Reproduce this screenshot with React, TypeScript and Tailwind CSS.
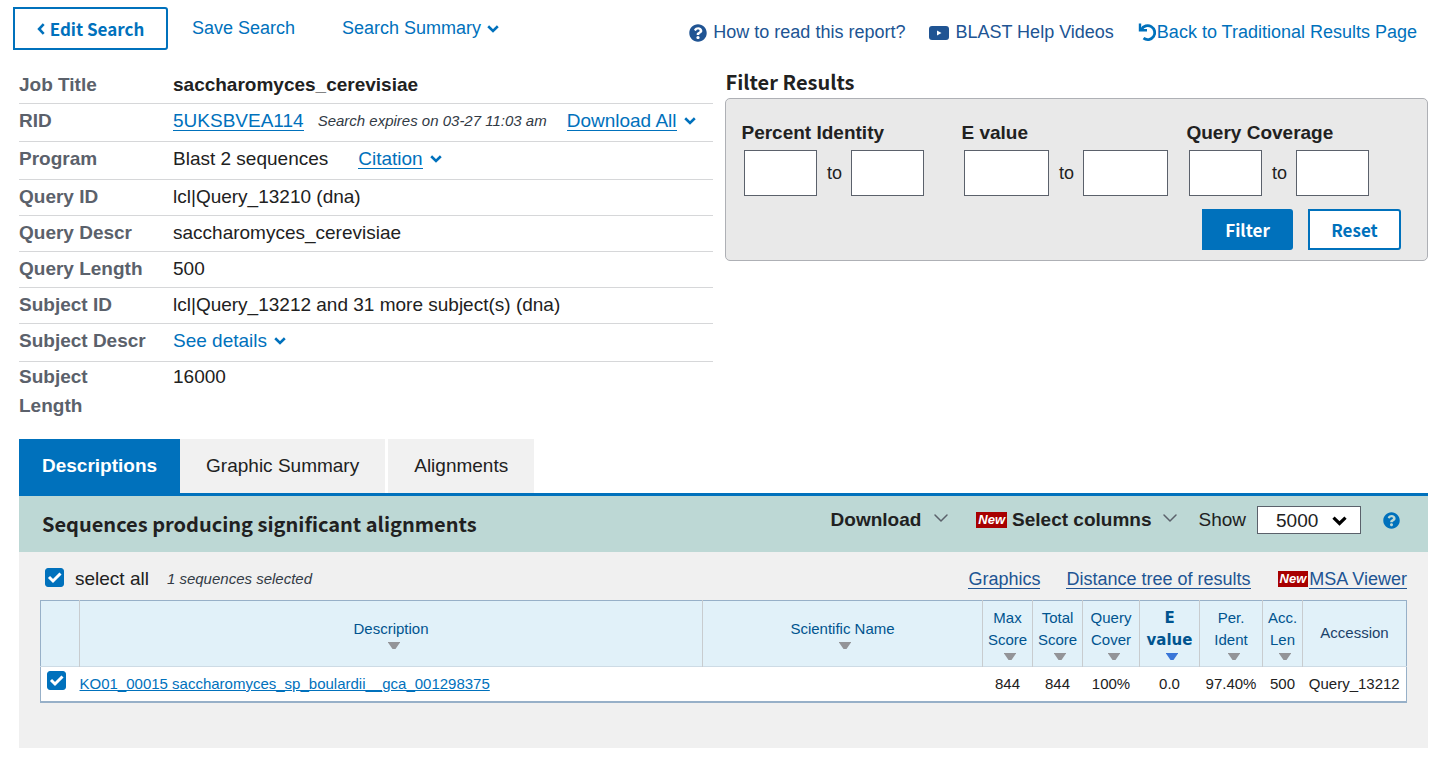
import { useState } from 'react';
import type { ReactNode } from 'react';
import { FaQuestionCircle } from 'react-icons/fa';
import { ChevronDown } from 'lucide-react';

const TABS = ['Descriptions', 'Graphic Summary', 'Alignments'];

const FILTERS = [
  { id: 'identity', label: 'Percent Identity', block: 'w-[220px]', input: 'w-[73px]' },
  { id: 'evalue', label: 'E value', block: 'w-[225px]', input: 'w-[85px]' },
  { id: 'coverage', label: 'Query Coverage', block: 'w-[190px]', input: 'w-[73px]' },
];

const COLUMNS = [
  { lines: ['Description'], width: 'w-auto' },
  { lines: ['Scientific Name'], width: 'w-[280px]' },
  { lines: ['Max', 'Score'], width: 'w-[50px]' },
  { lines: ['Total', 'Score'], width: 'w-[50px]' },
  { lines: ['Query', 'Cover'], width: 'w-[57px]' },
  { lines: ['E', 'value'], width: 'w-[60px]', sorted: true },
  { lines: ['Per.', 'Ident'], width: 'w-[63px]' },
  { lines: ['Acc.', 'Len'], width: 'w-[40px]' },
];

const HITS = [
  {
    title: 'KO01_00015 saccharomyces_sp_boulardii__gca_001298375',
    values: ['', '844', '844', '100%', '0.0', '97.40%', '500', 'Query_13212'],
  },
];

const LINK = 'text-[#0071bc] border-b border-[#0071bc] leading-[19px]';
const DARK_LINK = 'text-[#205493] border-b border-[#205493] leading-[18px]';

function Caret({ className = 'h-2 w-3' }: { className?: string }) {
  return (
    <svg viewBox="0 0 12 8" className={`shrink-0 ${className}`} fill="none" stroke="currentColor" strokeWidth="2.6" aria-hidden="true">
      <path d="M1.200 1.300L6 5.900l4.800-4.600" />
    </svg>
  );
}

function CaretLeft() {
  return (
    <svg viewBox="0 0 8 12" className="h-3 w-2 shrink-0" fill="none" stroke="currentColor" strokeWidth="2.6" aria-hidden="true">
      <path d="M6.700 1.200L2.100 6l4.600 4.800" />
    </svg>
  );
}

function VideoIcon() {
  return (
    <svg viewBox="0 0 20 14" className="h-[14px] w-5 shrink-0" aria-hidden="true">
      <rect width="20" height="14" rx="3" fill="#205493" />
      <path d="M8 4.500v5l4.500-2.500z" fill="#fff" />
    </svg>
  );
}

function UndoIcon() {
  return (
    <svg viewBox="0 0 19 19" className="size-[19px] shrink-0" fill="none" stroke="currentColor" aria-hidden="true">
      <path d="M3.500 6.500A7 7 0 1 1 5.500 15.200" strokeWidth="2.800" />
      <path d="M2 .5v6.800h7" strokeWidth="2.400" />
    </svg>
  );
}

function NewBadge() {
  return (
    <span className="bg-[#a80000] px-[2px] text-[13px] leading-4 font-bold text-white italic">New</span>
  );
}

function CheckBox({ label, checked, onChange }: { label?: string; checked: boolean; onChange: () => void }) {
  return (
    <span className="relative block size-[19px] shrink-0">
      <input
        id={label ? undefined : 'select-all'}
        type="checkbox"
        aria-label={label}
        checked={checked}
        onChange={onChange}
        className="block size-[19px] appearance-none rounded-[3px] border border-[#0071bc] bg-white checked:bg-[#0071bc]"
      />
      {checked && (
        <svg viewBox="0 0 19 19" className="pointer-events-none absolute inset-0" fill="none" stroke="#fff" strokeWidth="3">
          <path d="M4 9l4 4 7.500-7.500" />
        </svg>
      )}
    </span>
  );
}

function SummaryRow({ label, tall, children }: { label: string; tall?: boolean; children: ReactNode }) {
  return (
    <div className={`flex border-b border-[#d6d7d9] pt-[2px] leading-[29px] ${tall ? 'pb-[6px]' : 'pb-1'}`}>
      <dt className="w-[154px] shrink-0 font-bold whitespace-nowrap text-[#5b616b]">{label}</dt>
      <dd className="flex min-w-0 items-center">{children}</dd>
    </div>
  );
}

export default function App() {
  const [tab, setTab] = useState('Descriptions');
  const [selected, setSelected] = useState(true);
  const toggle = () => setSelected(!selected);

  return (
    <div className="bg-white pb-4 font-['Liberation_Sans',Arial,sans-serif] text-[19px] text-[#212121]">
      {/* Top links */}
      <header className="flex items-start justify-between pt-[7px] pr-6 pl-[13px] text-[18px] whitespace-nowrap text-[#0071bc]">
        <div className="flex items-center">
          <button
            type="button"
            className="flex h-[43px] w-[155px] items-center justify-center gap-[5px] rounded-r-[3px] border-2 border-[#0071bc] font-['Noto_Sans_CJK_SC',sans-serif] text-[17px] font-bold"
          >
            <CaretLeft />
            Edit Search
          </button>
          <a href="#save" className="ml-6">Save Search</a>
          <button type="button" className="ml-[47px] flex items-center gap-[6px]">
            Search Summary
            <Caret />
          </button>
        </div>
        <nav className="flex h-[51px] items-center">
          <a href="#help" className="flex items-center gap-[6px] text-[#205493]">
            <FaQuestionCircle className="size-[18px]" />
            How to read this report?
          </a>
          <a href="#videos" className="ml-6 flex items-center gap-[6px] text-[#205493]">
            <VideoIcon />
            BLAST Help Videos
          </a>
          <a href="#traditional" className="ml-6 flex items-center">
            <UndoIcon />
            Back to Traditional Results Page
          </a>
        </nav>
      </header>

      <main className="pr-[13px] pl-[19px]">
        <div className="grid grid-cols-[694fr_702fr] gap-3 pt-[3px]">
          {/* Job summary */}
          <dl className="pt-[7px]">
            <SummaryRow label="Job Title"><b>saccharomyces_cerevisiae</b></SummaryRow>
            <SummaryRow label="RID" tall>
              <a href="#rid" className={LINK}>5UKSBVEA114</a>
              <i className="ml-[14px] text-[15px] text-[#323a45]">Search expires on 03-27 11:03 am</i>
              <a href="#download" className={`ml-5 ${LINK}`}>Download All</a>
              <Caret className="ml-[7px] h-2 w-3 text-[#0071bc]" />
            </SummaryRow>
            <SummaryRow label="Program" tall>
              Blast 2 sequences
              <a href="#citation" className={`ml-[30px] ${LINK}`}>Citation</a>
              <Caret className="ml-[7px] h-2 w-3 text-[#0071bc]" />
            </SummaryRow>
            <SummaryRow label="Query ID">lcl|Query_13210 (dna)</SummaryRow>
            <SummaryRow label="Query Descr">saccharomyces_cerevisiae</SummaryRow>
            <SummaryRow label="Query Length">500</SummaryRow>
            <SummaryRow label="Subject ID">lcl|Query_13212 and 31 more subject(s) (dna)</SummaryRow>
            <SummaryRow label="Subject Descr" tall>
              <button type="button" className="flex items-center gap-[7px] text-[#0071bc]">
                See details
                <Caret />
              </button>
            </SummaryRow>
            <div className="flex leading-[29px]">
              <dt className="w-[154px] shrink-0 pr-12 font-bold text-[#5b616b]">Subject Length</dt>
              <dd>16000</dd>
            </div>
          </dl>

          {/* Filters */}
          <section>
            <h2 className="pt-1 font-['Noto_Sans_CJK_SC',sans-serif] text-[20px] leading-[33px] font-bold">Filter Results</h2>
            <form
              className="rounded-[5px] border border-[#aeb0b5] bg-[#e9e9e9] pt-5 pr-[26px] pb-[10px] pl-[15px]"
              onSubmit={(e) => e.preventDefault()}
            >
              <div className="flex">
                {FILTERS.map((f) => (
                  <fieldset key={f.id} className={f.block}>
                    <legend className="leading-[27px] font-bold">{f.label}</legend>
                    <div className="flex items-center pt-1 pl-[3px]">
                      <input aria-label={`${f.label} from`} className={`h-[46px] border border-[#5b616b] bg-white px-2 ${f.input}`} />
                      <label htmlFor={`${f.id}-to`} className="w-[34px] text-center text-[18px]">to</label>
                      <input id={`${f.id}-to`} className={`h-[46px] border border-[#5b616b] bg-white px-2 ${f.input}`} />
                    </div>
                  </fieldset>
                ))}
              </div>
              <div className="mt-[13px] flex justify-end gap-[15px] font-['Noto_Sans_CJK_SC',sans-serif] text-[17px] font-bold">
                <button type="submit" className="h-[41px] w-[91px] rounded-r-[3px] bg-[#0071bc] leading-[41px] text-white">
                  Filter
                </button>
                <button type="reset" className="h-[41px] w-[93px] rounded-r-[3px] border-2 border-[#0071bc] bg-white leading-[37px] text-[#0071bc]">
                  Reset
                </button>
              </div>
            </form>
          </section>
        </div>

        {/* Result tabs */}
        <div role="tablist" className="mt-[19px] flex gap-[3px] border-b-[3px] border-[#0071bc]">
          {TABS.map((name) => (
            <button
              key={name}
              type="button"
              role="tab"
              aria-selected={tab === name}
              onClick={() => setTab(name)}
              className={`h-[54px] ${
                tab === name ? '-mr-[3px] bg-[#0071bc] px-[23px] font-bold text-white' : 'bg-[#f1f1f1] px-[26px]'
              }`}
            >
              {name}
            </button>
          ))}
        </div>

        <section className="bg-[#f0f0f0] pb-[45px]">
          <div className="flex h-14 items-center justify-between bg-[#bdd8d5] pr-7 pl-[23px]">
            <h2 className="font-['Noto_Sans_CJK_SC',sans-serif] text-[20px] font-bold">
              Sequences producing significant alignments
            </h2>
            <div className="flex items-center pb-2 whitespace-nowrap">
              <button type="button" className="flex items-center gap-2 font-bold">
                Download
                <ChevronDown className="mb-1 size-6 text-[#5b616b]" strokeWidth={1.5} />
              </button>
              <button type="button" className="ml-[23px] flex items-center gap-[5px] font-bold">
                <NewBadge />
                Select columns
                <ChevronDown className="mb-1 ml-[2px] size-6 text-[#5b616b]" strokeWidth={1.5} />
              </button>
              <label htmlFor="show" className="ml-4">Show</label>
              <span className="relative ml-[11px]">
                <select id="show" defaultValue="5000" className="block h-7 w-[104px] appearance-none border border-[#5b616b] bg-white pl-[18px]">
                  <option>100</option>
                  <option>500</option>
                  <option>1000</option>
                  <option>5000</option>
                </select>
                <Caret className="pointer-events-none absolute top-[10px] right-[14px] h-[10px] w-[15px] text-black" />
              </span>
              <button type="button" aria-label="Help" className="ml-[22px] text-[#0071bc]">
                <FaQuestionCircle className="size-[17px]" />
              </button>
            </div>
          </div>

          <div className="flex h-12 items-center justify-between pt-[6px] pr-[21px] pl-[26px]">
            <div className="flex items-center">
              <div className="pb-1">
                <CheckBox checked={selected} onChange={toggle} />
              </div>
              <label htmlFor="select-all" className="ml-[11px]">select all</label>
              <i className="ml-[18px] text-[15px] text-[#323a45]">{selected ? 1 : 0} sequences selected</i>
            </div>
            <div className="flex items-center text-[18px]">
              <a href="#graphics" className={DARK_LINK}>Graphics</a>
              <a href="#tree" className={`ml-[26px] ${DARK_LINK}`}>Distance tree of results</a>
              <span className="ml-[27px] flex items-center">
                <NewBadge />
                <a href="#msa" className={`ml-px ${DARK_LINK}`}>MSA Viewer</a>
              </span>
            </div>
          </div>

          <div className="px-[21px]">
            <table className="w-full table-fixed border-collapse border border-b-2 border-[#97b0c8] bg-white text-center text-[15px]">
              <thead className="bg-[#e1f1f9] text-[#00548f]">
                <tr className="h-[66px] border-b border-[#cddbe5]">
                  <th className="w-[39px]" aria-label="Select" />
                  {COLUMNS.map((col) => (
                    <th key={col.lines.join(' ')} className={`border-l border-[#c8cccf] p-0 font-normal ${col.width}`}>
                      <button
                        type="button"
                        className={`w-full leading-[22px] ${col.sorted ? "font-['DejaVu_Sans',sans-serif] font-bold" : ''}`}
                      >
                        {col.lines.map((line) => (
                          <span key={line} className="block">{line}</span>
                        ))}
                        <svg
                          viewBox="0 0 12 7"
                          className={`mx-auto mt-[2px] block h-[7px] w-[17px] pl-[5px] ${col.sorted ? 'text-[#3a76d8]' : 'text-[#939498]'}`}
                        >
                          <path d="M0 0h12v.5L7.500 7h-3L0 .5z" fill="currentColor" />
                        </svg>
                      </button>
                    </th>
                  ))}
                  <th className="w-[104px] border-l border-[#c8cccf] p-0 font-normal text-[#1b4169]">Accession</th>
                </tr>
              </thead>
              <tbody>
                {HITS.map((hit) => (
                  <tr key={hit.title} className="h-[35px]">
                    <td className="pb-[7px] pl-[6px]">
                      <CheckBox label={`Select ${hit.title}`} checked={selected} onChange={toggle} />
                    </td>
                    <td className="p-0 text-left">
                      <a href="#hit" className="text-[#0071bc] underline">{hit.title}</a>
                    </td>
                    {hit.values.map((value, i) => (
                      <td key={i} className="p-0">{value}</td>
                    ))}
                  </tr>
                ))}
              </tbody>
            </table>
          </div>
        </section>
      </main>
    </div>
  );
}
